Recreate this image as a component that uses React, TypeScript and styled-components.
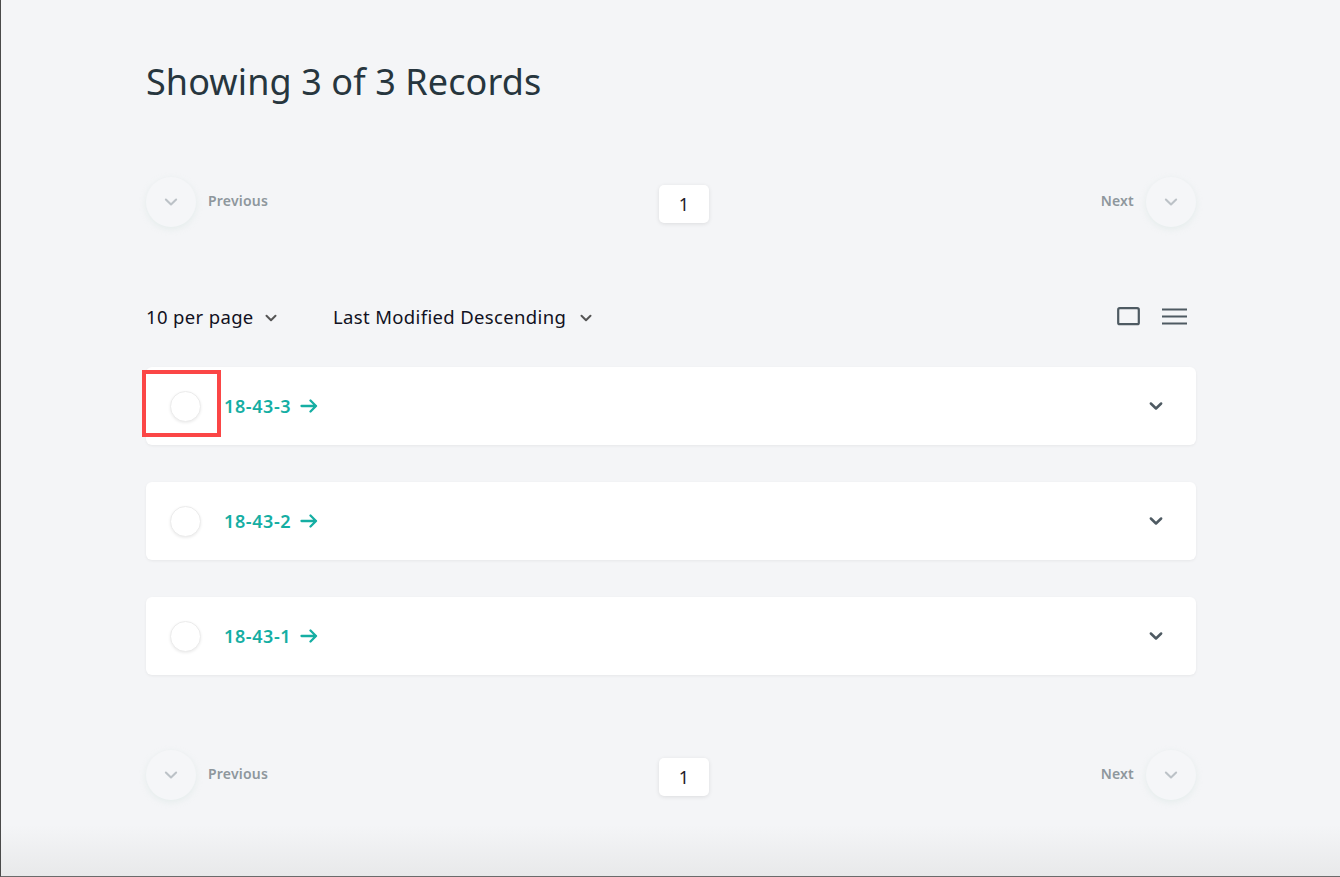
import React from "react";
import styled, { createGlobalStyle } from "styled-components";

const Global = createGlobalStyle`
  html, body { margin: 0; padding: 0; }
  body {
    background: #f4f5f7;
    font-family: "Noto Sans", "Open Sans", sans-serif;
    width: 1340px;
    height: 877px;
    overflow: hidden;
  }
`;

const Frame = styled.div`
  position: relative;
  box-sizing: border-box;
  width: 1340px;
  height: 877px;
  border-left: 1px solid #4a4a4a;
  border-bottom: 1px solid #6b6b6b;
  background: linear-gradient(to bottom, #f4f5f7 0px, #f4f5f7 825px, #e8e9ea 876px);
  overflow: hidden;
`;

const Main = styled.main`
  width: 1050px;
  margin-left: 145px;
  padding-top: 57px;
  display: flex;
  flex-direction: column;
`;

const Title = styled.h1`
  margin: 0;
  font-size: 36px;
  font-weight: 400;
  color: #27363e;
  line-height: 50px;
  letter-spacing: 0.1px;
`;

const Pager = styled.div<{ $top: number }>`
  margin-top: ${(p) => p.$top}px;
  display: flex;
  align-items: center;
  justify-content: space-between;
  height: 50px;
`;

const PagerSide = styled.div`
  display: flex;
  align-items: center;
  gap: 12px;
  width: 200px;
`;

const PagerSideRight = styled(PagerSide)`
  justify-content: flex-end;
`;

const RoundBtn = styled.button`
  width: 50px;
  height: 50px;
  border-radius: 50%;
  border: none;
  background: #f5f6f8;
  box-shadow: 0 2px 6px rgba(200, 220, 215, 0.35);
  display: flex;
  align-items: center;
  justify-content: center;
  padding: 0;
  color: #bcc2c7;
`;

const PagerLabel = styled.span`
  font-size: 14px;
  font-weight: 600;
  color: #8e979d;
  letter-spacing: 0.2px;
  margin-top: -3px;
`;

const PageBox = styled.div`
  width: 50px;
  height: 38px;
  margin-top: 4px;
  margin-left: 26px;
  box-sizing: border-box;
  background: #fff;
  border-radius: 5px;
  box-shadow: 0 1px 4px rgba(0, 0, 0, 0.1);
  display: flex;
  align-items: center;
  justify-content: center;
  font-size: 18px;
  color: #1c1c28;
`;

const Controls = styled.div`
  margin-top: 67px;
  display: flex;
  align-items: center;
  height: 44px;
`;

const Select = styled.div<{ $width: number; $gap: number }>`
  display: flex;
  align-items: center;
  gap: ${(p) => p.$gap}px;
  width: ${(p) => p.$width}px;
  font-size: 18.5px;
  letter-spacing: 0.35px;
  color: #111122;
`;

const Chevron = styled.span`
  display: inline-flex;
  color: #555;
  margin-top: 4px;
`;

const ViewIcons = styled.div`
  margin-left: auto;
  display: flex;
  align-items: center;
  gap: 22px;
  margin-right: 9px;
  color: #4e5a62;
`;

const List = styled.div`
  margin-top: 29px;
  display: flex;
  flex-direction: column;
  gap: 37px;
`;

const Card = styled.div`
  position: relative;
  height: 78px;
  background: #fff;
  border-radius: 6px;
  box-shadow: 0 1px 3px rgba(0, 0, 0, 0.06);
  display: flex;
  align-items: center;
  padding: 0 32px 0 24px;
`;

const Check = styled.div`
  width: 31px;
  height: 31px;
  border-radius: 50%;
  box-sizing: border-box;
  border: 1px solid #ececec;
  box-shadow: 0 1px 3px rgba(0, 0, 0, 0.08);
  background: #fff;
`;

const RecordLink = styled.a`
  margin-left: 23px;
  display: flex;
  align-items: center;
  gap: 9px;
  font-size: 18px;
  font-weight: 600;
  letter-spacing: 0.6px;
  color: #15aea3;
  text-decoration: none;
`;

const CardChevron = styled.span`
  margin-left: auto;
  display: inline-flex;
  color: #4e5a62;
`;

const Highlight = styled.div`
  position: absolute;
  left: -4px;
  top: 3px;
  width: 79px;
  height: 67px;
  box-sizing: border-box;
  border: 4px solid #fb4646;
  pointer-events: none;
`;

const ChevronDown = ({ size = 14, stroke = 2 }: { size?: number; stroke?: number }) => (
  <svg width={size} height={size} viewBox="0 0 14 14" fill="none">
    <path d="M2.5 4.8 L7 9.2 L11.5 4.8" stroke="currentColor" strokeWidth={stroke} strokeLinecap="round" strokeLinejoin="round" />
  </svg>
);

const Arrow = () => (
  <svg width="18" height="14" viewBox="0 0 18 14" fill="none">
    <path d="M1.5 7 H16 M10.5 1.5 L16 7 L10.5 12.5" stroke="currentColor" strokeWidth="2.3" strokeLinecap="round" strokeLinejoin="round" />
  </svg>
);

const Pagination = ({ top }: { top: number }) => (
  <Pager $top={top}>
    <PagerSide>
      <RoundBtn aria-label="previous">
        <ChevronDown size={16} stroke={1.8} />
      </RoundBtn>
      <PagerLabel>Previous</PagerLabel>
    </PagerSide>
    <PageBox>1</PageBox>
    <PagerSideRight>
      <PagerLabel>Next</PagerLabel>
      <RoundBtn aria-label="next">
        <ChevronDown size={16} stroke={1.8} />
      </RoundBtn>
    </PagerSideRight>
  </Pager>
);

const records = ["18-43-3", "18-43-2", "18-43-1"];

export default function App() {
  return (
    <Frame>
      <Global />
      <Main>
        <Title>Showing 3 of 3 Records</Title>
        <Pagination top={70} />
        <Controls>
          <Select $width={187} $gap={10}>
            10 per page
            <Chevron>
              <ChevronDown size={14} stroke={2} />
            </Chevron>
          </Select>
          <Select $width={300} $gap={13}>
            Last Modified Descending
            <Chevron>
              <ChevronDown size={14} stroke={2} />
            </Chevron>
          </Select>
          <ViewIcons>
            <svg width="23" height="19" viewBox="0 0 23 19" fill="none">
              <rect x="1.2" y="1.2" width="20.6" height="16" rx="1.5" stroke="currentColor" strokeWidth="2.2" />
            </svg>
            <svg width="25" height="19" viewBox="0 0 25 19" fill="none">
              <path d="M0 2.5 H25 M0 9.5 H25 M0 16.5 H25" stroke="currentColor" strokeWidth="2.2" />
            </svg>
          </ViewIcons>
        </Controls>
        <List>
          {records.map((r, i) => (
            <Card key={r}>
              <Check />
              <RecordLink href="#">
                {r}
                <Arrow />
              </RecordLink>
              <CardChevron>
                <ChevronDown size={16} stroke={2.2} />
              </CardChevron>
              {i === 0 && <Highlight />}
            </Card>
          ))}
        </List>
        <Pagination top={75} />
      </Main>
    </Frame>
  );
}
